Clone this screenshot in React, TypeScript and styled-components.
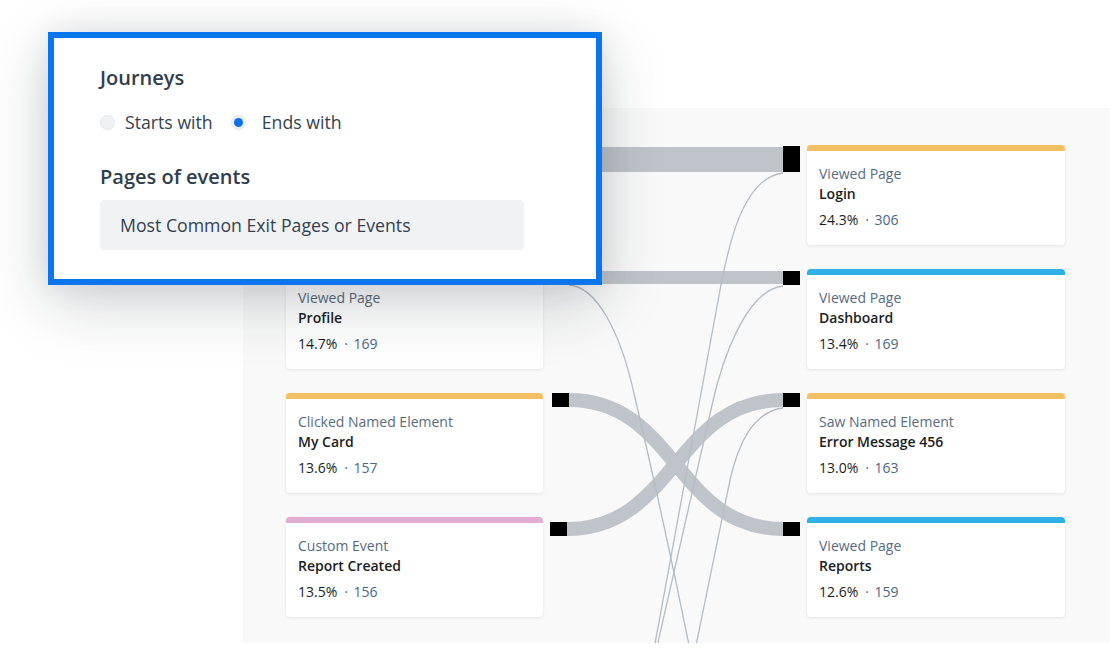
import React from "react";
import styled, { createGlobalStyle } from "styled-components";

const GlobalStyle = createGlobalStyle`
  html, body { margin: 0; padding: 0; background: #ffffff; }
  body { font-family: "Open Sans", "Lato", sans-serif; -webkit-font-smoothing: antialiased; }
  * { box-sizing: border-box; }
`;

const Stage = styled.div`
  position: relative;
  width: 1110px;
  height: 650px;
  overflow: hidden;
  background: #ffffff;
  padding: 108px 0 0 243px;
`;

const Panel = styled.div`
  position: relative;
  width: 867px;
  height: 535px;
  background: #f9f9f9;
  overflow: hidden;
  display: grid;
  grid-template-columns: 257px 258px;
  column-gap: 264px;
  align-content: start;
  padding: 37px 0 0 43px;
`;

const Links = styled.svg`
  position: absolute;
  left: 0;
  top: 0;
  z-index: 0;
`;

const Column = styled.div`
  position: relative;
  z-index: 1;
  display: flex;
  flex-direction: column;
  gap: 24px;
`;

const Card = styled.div<{ $bar: string }>`
  height: 100px;
  background: #ffffff;
  border-top: 6px solid ${(p) => p.$bar};
  border-radius: 4px;
  box-shadow: 0 1px 3px rgba(30, 40, 50, 0.1);
  padding: 13px 12px 0 12px;
`;

const Category = styled.div`
  font-size: 14px;
  line-height: 20px;
  color: #586b7e;
`;

const Name = styled.div`
  font-size: 14px;
  line-height: 20px;
  font-weight: 600;
  color: #1a1e22;
`;

const Metric = styled.div`
  margin-top: 6px;
  font-size: 14px;
  line-height: 20px;
  color: #1a1e22;
  display: flex;
  gap: 7px;
`;

const Count = styled.span`
  color: #4b6784;
  word-spacing: 2px;
`;

const Popup = styled.div`
  position: absolute;
  left: 48px;
  top: 32px;
  width: 554px;
  height: 253px;
  background: #ffffff;
  border: 6px solid #0a76ee;
  box-shadow: 0 18px 60px rgba(20, 30, 40, 0.2), 0 0 30px rgba(20, 30, 40, 0.08);
  padding: 28px 46px 0 46px;
  z-index: 5;
  color: #2f3d4b;
`;

const Heading = styled.div<{ $gap?: number }>`
  font-size: 20px;
  line-height: 24px;
  font-weight: 600;
  color: #2f3d4b;
  margin-top: ${(p) => p.$gap ?? 0}px;
`;

const RadioRow = styled.div`
  margin-top: 20px;
  display: flex;
  align-items: center;
  gap: 18px;
  height: 24px;
`;

const RadioOption = styled.label<{ $space: number }>`
  display: flex;
  align-items: center;
  gap: ${(p) => p.$space}px;
  font-size: 17.7px;
  line-height: 24px;
  color: #34424f;
`;

const RadioDot = styled.span<{ $on?: boolean }>`
  width: 15px;
  height: 15px;
  border-radius: 50%;
  background: #eff1f3;
  border: 1px solid #e3e6e9;
  display: flex;
  align-items: center;
  justify-content: center;
  &::after {
    content: "";
    width: 9px;
    height: 9px;
    border-radius: 50%;
    background: ${(p) => (p.$on ? "#0a72e8" : "transparent")};
  }
`;

const Select = styled.div`
  margin-top: 11px;
  width: 424px;
  height: 50px;
  border-radius: 4px;
  background: #f1f2f4;
  display: flex;
  align-items: center;
  padding-left: 20px;
  font-size: 17.7px;
  color: #34424f;
`;

type Node = { bar: string; cat?: string; name?: string; pct?: string; count?: string };

const leftNodes: Node[] = [
  { bar: "#2fb0e8" },
  { bar: "#f5bf63", cat: "Viewed Page", name: "Profile", pct: "14.7%", count: "169" },
  { bar: "#f5bf63", cat: "Clicked Named Element", name: "My Card", pct: "13.6%", count: "157" },
  { bar: "#e2acd5", cat: "Custom Event", name: "Report Created", pct: "13.5%", count: "156" },
];

const rightNodes: Node[] = [
  { bar: "#f5bf63", cat: "Viewed Page", name: "Login", pct: "24.3%", count: "306" },
  { bar: "#2fb0e8", cat: "Viewed Page", name: "Dashboard", pct: "13.4%", count: "169" },
  { bar: "#f5bf63", cat: "Saw Named Element", name: "Error Message 456", pct: "13.0%", count: "163" },
  { bar: "#2fb0e8", cat: "Viewed Page", name: "Reports", pct: "12.6%", count: "159" },
];

const NodeCard = ({ n }: { n: Node }) => (
  <Card $bar={n.bar}>
    {n.name && (
      <>
        <Category>{n.cat}</Category>
        <Name>{n.name}</Name>
        <Metric>
          <span>{n.pct}</span>
          <Count>· {n.count}</Count>
        </Metric>
      </>
    )}
  </Card>
);

const BAND = "#bec4c9";
const THIN = "#b5bcc3";

const LinkLayer = () => (
  <Links width={867} height={535} viewBox="243 108 867 535">
    <rect x={569} y={147} width={214} height={25} fill={BAND} />
    <rect x={569} y={271} width={214} height={13} fill={BAND} />
    <path d="M569 400 C676 400 676 529 783 529" stroke={BAND} strokeWidth={14} fill="none" />
    <path d="M567 529 C675 529 675 400 783 400" stroke={BAND} strokeWidth={14} fill="none" />
    <path d="M569 285 C598 287 620 335 632 385 C645 440 668 540 692 660" stroke={THIN} strokeWidth={1.3} fill="none" />
    <path d="M783 173 C742 178 728 248 720 290 L652 660" stroke={THIN} strokeWidth={1.3} fill="none" />
    <path d="M783 286 C746 290 722 360 712 405 L654 660" stroke={THIN} strokeWidth={1.3} fill="none" />
    <path d="M783 408 C752 412 738 445 730 480 L693 660" stroke={THIN} strokeWidth={1.3} fill="none" />
    <rect x={552} y={147} width={17} height={25} fill="#000" />
    <rect x={552} y={271} width={17} height={14} fill="#000" />
    <rect x={552} y={393} width={17} height={14} fill="#000" />
    <rect x={550} y={522} width={17} height={14} fill="#000" />
    <rect x={783} y={146} width={17} height={26} fill="#000" />
    <rect x={783} y={271} width={17} height={14} fill="#000" />
    <rect x={783} y={393} width={17} height={14} fill="#000" />
    <rect x={783} y={522} width={17} height={14} fill="#000" />
  </Links>
);

export default function App() {
  return (
    <>
      <GlobalStyle />
      <Stage>
        <Panel>
          <LinkLayer />
          <Column>
            {leftNodes.map((n, i) => (
              <NodeCard key={`l${i}`} n={n} />
            ))}
          </Column>
          <Column>
            {rightNodes.map((n, i) => (
              <NodeCard key={`r${i}`} n={n} />
            ))}
          </Column>
        </Panel>
        <Popup>
          <Heading>Journeys</Heading>
          <RadioRow>
            <RadioOption $space={10}>
              <RadioDot />
              Starts with
            </RadioOption>
            <RadioOption $space={16}>
              <RadioDot $on />
              Ends with
            </RadioOption>
          </RadioRow>
          <Heading $gap={31}>Pages of events</Heading>
          <Select>Most Common Exit Pages or Events</Select>
        </Popup>
      </Stage>
    </>
  );
}
